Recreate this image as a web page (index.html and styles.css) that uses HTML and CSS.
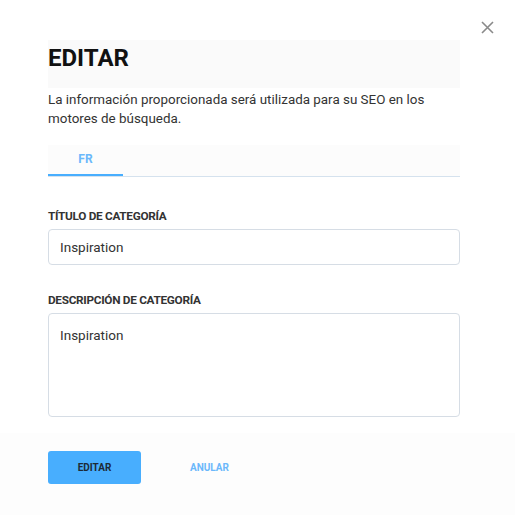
FILE: index.html
```html
<!DOCTYPE html>
<html lang="es">
<head>
	<meta charset="UTF-8">
	<title>Editar</title>
	<link rel="stylesheet" href="styles.css">
</head>
<body>
	<div class="modal">
		<div class="close">
			<svg width="13" height="13" viewBox="0 0 13 13"><path d="M1 1L12 12M12 1L1 12" stroke="#8a8a8a" stroke-width="1.6" fill="none"/></svg>
		</div>
		<div class="content">
			<div class="head"><h1>EDITAR</h1></div>
			<p class="desc">La información proporcionada será utilizada para su SEO en los motores de búsqueda.</p>
			<div class="tabs"><span class="tab active">FR</span></div>
			<div class="field">
				<label>TÍTULO DE CATEGORÍA</label>
				<input type="text" value="Inspiration">
			</div>
			<div class="field">
				<label>DESCRIPCIÓN DE CATEGORÍA</label>
				<textarea>Inspiration</textarea>
			</div>
		</div>
		<div class="foot">
			<button class="btn">EDITAR</button>
			<a class="cancel">ANULAR</a>
		</div>
	</div>
</body>
</html>
```

FILE: styles.css
```css
body{margin:0;background:#fff;font-family:Roboto,"Liberation Sans",sans-serif;color:#333;}
.modal{position:relative;width:515px;height:515px;display:flex;flex-direction:column;}
.close{position:absolute;right:21px;top:19px;width:13px;height:13px;}
.content{padding:40px 55px 0 48px;flex:1;}
.head{height:48px;background:#fafafa;padding-top:3px;box-sizing:border-box;}
h1{margin:0;font-size:24px;line-height:30px;font-weight:700;color:#111;letter-spacing:0;}
.desc{margin:2px 0 0;font-size:13.4px;line-height:19px;color:#333;}
.tabs{margin-top:17px;height:31px;background:#fcfcfc;border-bottom:1px solid #d5e2ee;display:flex;}
.tab{width:75px;text-align:center;line-height:29px;font-size:12px;font-weight:700;color:#6bb8fb;}
.tab.active{border-bottom:2px solid #48aefe;}
.field{margin-top:32px;}
.field + .field{margin-top:28px;}
label{display:block;font-size:11.8px;font-weight:700;color:#333;letter-spacing:-0.3px;margin-bottom:6px;}
input,textarea{display:block;box-sizing:border-box;width:100%;border:1px solid #d6dde5;border-radius:4px;font-family:inherit;font-size:13.5px;color:#333;padding:0 11px;outline:none;}
input{height:36px;}
textarea{height:104px;padding-top:13px;resize:none;}
.foot{flex:0 0 82px;background:#fdfdfd;display:flex;align-items:center;padding:0 48px;box-sizing:border-box;}
.btn{width:93px;height:33px;background:#48aefe;border:none;border-radius:3px;font-family:inherit;font-size:10px;font-weight:700;color:#1d2a36;margin-top:-14px;}
.cancel{margin-left:49px;font-size:10px;font-weight:700;color:#6bb8fb;margin-top:-14px;}
```
